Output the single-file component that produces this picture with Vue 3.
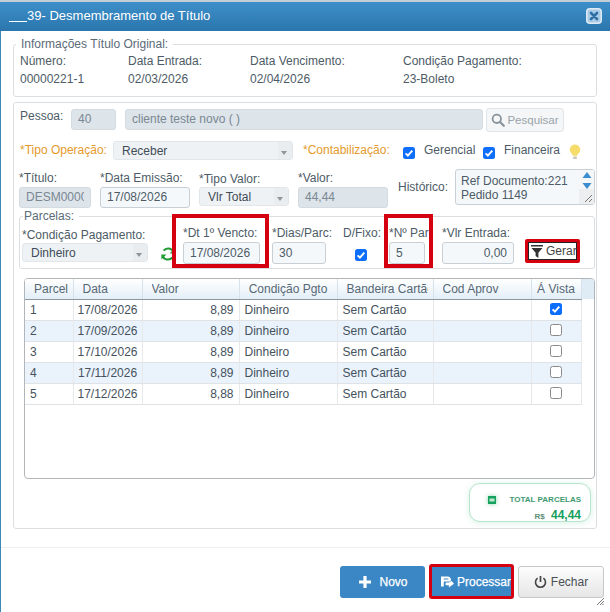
<script setup>
const info = [
  { label: 'Número:', value: '00000221-1', w: 108 },
  { label: 'Data Entrada:', value: '02/03/2026', w: 122 },
  { label: 'Data Vencimento:', value: '02/04/2026', w: 153 },
  { label: 'Condição Pagamento:', value: '23-Boleto', w: 160 }
]
const heads = ['Parcel', 'Data', 'Valor', 'Condição Pgto', 'Bandeira Cartão', 'Cod Aprov', 'Á Vista']
const rows = [
  { n: 1, d: '17/08/2026', v: '8,89', c: true },
  { n: 2, d: '17/09/2026', v: '8,89', c: false },
  { n: 3, d: '17/10/2026', v: '8,89', c: false },
  { n: 4, d: '17/11/2026', v: '8,89', c: false },
  { n: 5, d: '17/12/2026', v: '8,88', c: false }
]
</script>

<template>
  <div class="page">
    <div class="modal">
      <header class="head">
        <span class="title"><u>&nbsp;&nbsp;&nbsp;&nbsp;&nbsp;</u>39- Desmembramento de Título</span>
        <span class="close">
          <svg width="16" height="16" viewBox="0 0 16 16"><rect x="0.75" y="0.75" width="14.5" height="14.5" rx="3" fill="#a9cbe6" stroke="#dfeaf4" stroke-width="1.5"/><path d="M5 5l6 6M11 5l-6 6" stroke="#2f6fa5" stroke-width="2.6" stroke-linecap="round"/></svg>
        </span>
      </header>

      <div class="body">
        <fieldset class="fs orig">
          <legend>Informações Título Original:</legend>
          <div class="info">
            <div v-for="i in info" :key="i.label" class="info-col" :style="{ width: i.w + 'px' }">
              <div>{{ i.label }}</div>
              <div>{{ i.value }}</div>
            </div>
          </div>
        </fieldset>

        <section class="panel">
          <div class="r-pessoa">
            <span class="lb-p">Pessoa:</span>
            <span class="inp dis w45">40</span>
            <span class="inp dis name">cliente teste novo ( )</span>
            <span class="btn-search">
              <svg width="14" height="14" viewBox="0 0 14 14"><circle cx="5.8" cy="5.8" r="4.2" fill="none" stroke="#8a949c" stroke-width="1.8"/><path d="M9 9l3.8 3.8" stroke="#8a949c" stroke-width="2.2" stroke-linecap="round"/></svg>
              Pesquisar
            </span>
          </div>

          <div class="r-tipo">
            <span class="orange op">*Tipo Operação:</span>
            <span class="sel op-sel">Receber<i class="caret"></i></span>
            <span class="orange cont">*Contabilização:</span>
            <span class="cb on c1"><svg viewBox="0 0 12 12"><path d="M2.6 6.4l2.3 2.3 4.4-5" fill="none" stroke="#fff" stroke-width="1.9"/></svg></span>
            <span class="t-ger">Gerencial</span>
            <span class="cb on c2"><svg viewBox="0 0 12 12"><path d="M2.6 6.4l2.3 2.3 4.4-5" fill="none" stroke="#fff" stroke-width="1.9"/></svg></span>
            <span class="t-fin">Financeira</span>
            <svg class="bulb" width="12" height="16" viewBox="0 0 12 16"><path d="M6 .5a5.2 5.2 0 0 0-3.2 9.3c.7.6 1 1.2 1 2h4.4c0-.8.3-1.4 1-2A5.2 5.2 0 0 0 6 .5z" fill="#f6dc6a"/><rect x="4" y="12.4" width="4" height="2.6" rx="1" fill="#c9c7b4"/></svg>
          </div>

          <div class="r-tit">
            <div class="col w72"><label>*Título:</label><span class="inp dis clip"><span>DESM00000</span></span></div>
            <div class="col w90"><label>*Data Emissão:</label><span class="inp">17/08/2026</span></div>
            <div class="col w90"><label class="lb-tv">*Tipo Valor:</label><span class="sel tv">Vlr Total<i class="caret"></i></span></div>
            <div class="col w90"><label>*Valor:</label><span class="inp dis">44,44</span></div>
            <span class="hist">Histórico:</span>
            <div class="ta">
              <div>Ref Documento:221<br>Pedido 1149</div>
              <div class="spin">
                <svg width="10" height="20" viewBox="0 0 10 20"><path d="M5 1L9.5 7H.5zM.5 12h9L5 18z" fill="#3c8dd0"/></svg>
                <span class="grip-box">
                  <svg class="grip" width="9" height="9" viewBox="0 0 9 9"><path d="M1 8l7-7M5 8l3-3" stroke="#777" stroke-width="1"/></svg>
                </span>
              </div>
            </div>
          </div>

          <fieldset class="fs parc">
            <legend>Parcelas:</legend>
            <div class="parc-row">
              <div class="col w126"><label>*Condição Pagamento:</label><span class="sel">Dinheiro<i class="caret"></i></span></div>
              <svg class="refresh" width="14" height="14" viewBox="0 0 14 14"><path d="M12.4 5.2A5.7 5.7 0 0 0 2.6 3.6M1.6 8.8a5.7 5.7 0 0 0 9.8 1.6" fill="none" stroke="#1f9a34" stroke-width="2"/><path d="M13.6 1.4v5h-5zM.4 12.6v-5h5z" fill="#1f9a34"/></svg>
              <div class="col w77 mark"><label>*Dt 1º Vencto:</label><span class="inp">17/08/2026</span><b class="hl h1"></b></div>
              <div class="col w54 d"><label>*Dias/Parc:</label><span class="inp">30</span></div>
              <div class="col dfix"><label>D/Fixo:</label><span class="cb on"><svg viewBox="0 0 12 12"><path d="M2.6 6.4l2.3 2.3 4.4-5" fill="none" stroke="#fff" stroke-width="1.9"/></svg></span></div>
              <div class="col w36 np mark"><label>*Nº Par:</label><span class="inp">5</span><b class="hl h2"></b></div>
              <div class="col w72 ve"><label>*Vlr Entrada:</label><span class="inp right">0,00</span></div>
              <span class="gerar">
                <svg width="12" height="13" viewBox="0 0 12 13"><path d="M0 0h12v1.6H0zM.5 3h11L7.4 7.8V13L4.6 11V7.8z" fill="#333"/></svg>
                Gerar
              </span>
            </div>
          </fieldset>

          <div class="grid">
            <table>
              <colgroup>
                <col style="width:48px"><col style="width:69px"><col style="width:97px"><col style="width:98px"><col style="width:96px"><col style="width:98px"><col style="width:50px">
              </colgroup>
              <thead>
                <tr><th v-for="h in heads" :key="h" :class="{ lc: h === 'Condição Pgto' || h === 'Á Vista' }"><span>{{ h }}</span></th></tr>
              </thead>
              <tbody>
                <tr v-for="r in rows" :key="r.n">
                  <td>{{ r.n }}</td>
                  <td class="ctr">{{ r.d }}</td>
                  <td class="num">{{ r.v }}</td>
                  <td>Dinheiro</td>
                  <td>Sem Cartão</td>
                  <td></td>
                  <td class="ck">
                    <span v-if="r.c" class="cb on"><svg viewBox="0 0 12 12"><path d="M2.6 6.4l2.3 2.3 4.4-5" fill="none" stroke="#fff" stroke-width="1.9"/></svg></span>
                    <span v-else class="cb"></span>
                  </td>
                </tr>
              </tbody>
            </table>
          </div>

          <div class="total-wrap">
            <div class="total">
              <svg class="tic" width="8" height="8" viewBox="0 0 8 8"><rect width="8" height="8" fill="#16a05d"/><rect x="1.5" y="2.5" width="5" height="3" fill="#bfe8d2"/></svg>
              <div class="tt">
                <div class="t1">TOTAL PARCELAS</div>
                <div class="t2"><small>R$</small> 44,44</div>
              </div>
            </div>
          </div>
        </section>
      </div>

      <footer class="foot">
        <span class="b blue novo">
          <svg width="12" height="12" viewBox="0 0 12 12"><path d="M4.4 0h3.2v4.4H12v3.2H7.6V12H4.4V7.6H0V4.4h4.4z" fill="#fff"/></svg>
          <em>Novo</em>
        </span>
        <span class="b blue proc">
          <svg width="14" height="13" viewBox="0 0 14 13"><path d="M0 1h7.5a3.4 3.4 0 0 1 2.6 5.4H3V12H0zM3 3.3v1h5v-1z" fill="#fff" fill-rule="evenodd"/><path d="M8.5 7.5H5v3h3.5V13L14 9l-2.4-3z" fill="#fff"/></svg>
          Processar
        </span>
        <span class="b fechar">
          <svg width="13" height="14" viewBox="0 0 13 14"><path d="M3.6 3.2a5 5 0 1 0 5.8 0" fill="none" stroke="#444" stroke-width="1.6"/><path d="M6.5 1v6" stroke="#444" stroke-width="1.7"/></svg>
          Fechar
        </span>
        <svg class="rz" width="7" height="7" viewBox="0 0 7 7"><path d="M0 7l7-7M3 7l4-4M5.5 7L7 5.5" stroke="#777" stroke-width="1"/></svg>
      </footer>
    </div>
  </div>
</template>

<style>
html, body { margin: 0; background: #fff; }
</style>

<style scoped>
.page { width: 610px; height: 612px; overflow: hidden; background: #c3ced6; padding-top: 2px; box-sizing: border-box; font: 12px "Liberation Sans", Arial, sans-serif; color: #4d5b66; }
.modal { position: relative; height: 610px; background: #fff; border-left: 1px solid #3f87b8; border-radius: 4px 4px 0 0; box-sizing: border-box; display: flex; flex-direction: column; }
.head { height: 29px; flex: none; display: flex; align-items: center; justify-content: space-between; padding: 0 8px 2px 9px; background: linear-gradient(#3d8fc9, #2b76ad); color: #fff; font-size: 13px; box-sizing: border-box; margin-left: -1px; }
.close { display: flex; }

.body { flex: none; height: 516px; padding: 6px 12px 0 12px; box-sizing: border-box; }
.fs { margin: 0; padding: 0; border: 1px solid #dcdfe2; border-radius: 3px; }
legend { padding: 0 5px; color: #5b6b78; font-size: 12px; margin-left: -4px; line-height: 14px; }
.orig { width: 584px; height: 60px; box-sizing: border-box; padding-left: 6px; }
.info { display: flex; margin-top: 2px; }
.info-col { line-height: 17.5px; }

.panel { position: relative; width: 584px; height: 427px; box-sizing: border-box; margin-top: 5px; border: 1px solid #dcdfe2; border-radius: 3px; padding: 5px 0 0 5px; }

.inp { display: block; padding: 0 6px; background: #f4f8fb; border: 1px solid #c8d0d6; border-radius: 3px; height: 19px; line-height: 19px; white-space: nowrap; overflow: hidden; }
.dis { background: #dde4ea; border-color: #d3dbe1; color: #7a8892; }
.inp.right { text-align: right; }
.sel { position: relative; display: block; height: 19px; line-height: 18px; padding: 0 7px 0 8px; background: #eef2f5; border: 1px solid #e1e6ea; border-radius: 3px; box-sizing: border-box; color: #3f4c57; }
.sel::after { content: ""; position: absolute; right: 0; top: 0; bottom: 0; width: 14px; background: #e9edf0; }
.caret { position: absolute; z-index: 1; right: 5px; top: 9px; border: 3px solid transparent; border-top: 4px solid #8d969d; border-bottom: 0; }

.r-pessoa { display: flex; align-items: flex-start; height: 24px; padding-left: 1px; }
.lb-p { width: 51px; line-height: 17px; }
.w45 { width: 31px; }
.r-pessoa .inp { margin-top: 1px; }
.name { width: 344px; margin-left: 9px; }
.btn-search { margin-left: 3px; width: 78px; height: 24px; box-sizing: border-box; border: 1px solid #e0e4e7; border-radius: 3px; background: #f4f6f7; color: #9aa3aa; font-size: 11.5px; display: flex; align-items: center; justify-content: center; gap: 2px; }

.r-tipo { display: flex; align-items: center; height: 20px; margin-top: 8px; padding-left: 1px; }
.orange { color: #e59a2c; }
.op { width: 93px; }
.op-sel { width: 180px; }
.cont { margin-left: 10px; width: 100px; }
.cb { display: inline-block; width: 12px; height: 12px; border: 1px solid #8a8a8a; border-radius: 2.5px; box-sizing: border-box; background: #fff; flex: none; }
.cb.on { background: #0d6efd; border: none; }
.cb svg { display: block; width: 12px; height: 12px; }
.c1 { margin-top: 5px; }
.t-ger { margin-left: 9px; width: 59px; }
.c2 { margin-top: 5px; }
.t-fin { margin-left: 9px; width: 65px; }
.bulb { margin-top: 4px; }

.r-tit { display: flex; align-items: flex-start; height: 40px; margin-top: 10px; }
.col { display: flex; flex-direction: column; margin-right: 9px; flex: none; position: relative; }
.col label { line-height: 16px; height: 17px; white-space: nowrap; }
.w72 { width: 72px; }
.w90 { width: 90px; }
.w126 { width: 126px; }
.w77 { width: 77px; }
.w54 { width: 54px; }
.w36 { width: 36px; }
.lb-tv { margin-top: 1px; height: 16px !important; }
.clip span { display: block; overflow: hidden; }
.hist { margin: 10px 0 0 1px; width: 56px; }
.ta { position: relative; width: 140px; height: 36px; margin: -1px 0 0 1px; box-sizing: border-box; background: #f4f8fb; border: 1px solid #c8d0d6; border-radius: 3px; padding: 4px 5px; line-height: 14px; }
.spin { position: absolute; right: 0; top: 0; bottom: 0; width: 15px; background: #f4f6f8; display: flex; justify-content: center; padding-top: 1px; box-sizing: border-box; }
.grip-box { position: absolute; right: 0; bottom: 0; width: 15px; height: 15px; background: #eceef0; }
.grip { position: absolute; right: 1px; bottom: 1px; }

.parc { width: 576px; height: 59px; box-sizing: border-box; margin-top: 0; padding: 0 0 0 2px; }
.parc legend { padding: 0 5px 0 1px; margin-left: 1px; line-height: 12px; }
.parc-row { display: flex; align-items: flex-start; margin-top: 3px; position: relative; }
.parc-row > .col:first-child { margin-right: 0; }
.parc-row .col:first-child label { line-height: 14px; margin-top: 3px; height: 15px; }
.refresh { margin: 22px 0 0 13px; flex: none; }
.parc-row .w77 { margin-left: 8px; margin-right: 12px; }
.parc-row .inp { height: 20px; line-height: 20px; }
.d { margin-right: 17px !important; }
.dfix { width: 37px; margin-right: 9px !important; align-items: flex-start; }
.dfix .cb { margin: 7px 0 0 12px; }
.np { margin-right: 17px !important; }
.ve { margin-right: 11px !important; }
.hl { position: absolute; border: 4px solid #d5000f; box-sizing: border-box; pointer-events: none; }
.h1 { left: -11px; top: -11px; width: 97px; height: 54px; }
.h2 { left: -5px; top: -11px; width: 49px; height: 54px; }
.gerar { width: 55px; height: 24px; box-sizing: border-box; margin-top: 14px; border: 3px solid #d5000f; border-radius: 2px; background: #fff; box-shadow: inset 0 0 0 1px #222; color: #444; display: flex; align-items: center; gap: 3px; padding-left: 3px; white-space: nowrap; overflow: hidden; flex: none; }

.grid { width: 571px; height: 201px; box-sizing: border-box; margin: 9px 0 0 5px; border: 1px solid #b3b6b8; border-radius: 4px; overflow: hidden; position: relative; background: #fff; }
.grid::before { content: ""; position: absolute; left: 0; right: 0; top: 0; height: 20px; background: #dfecf6; }
table { position: relative; border-collapse: collapse; table-layout: fixed; width: 556px; }
th { height: 20px; padding: 0 5px 0 9px; box-sizing: border-box; font-weight: 400; text-align: left; color: #566874; background: linear-gradient(#fff, #e3eef7); border-right: 1px solid #d8e2ea; border-bottom: 1px solid #8f979c; overflow: hidden; white-space: nowrap; }
th span { display: block; overflow: hidden; }
th.lc { text-align: center; padding: 0 3px; }
td { height: 21px; padding: 0 5px; box-sizing: border-box; border-right: 1px solid #e6e8ea; border-bottom: 1px solid #dfe3e6; color: #45525c; white-space: nowrap; }
tbody tr:nth-child(even) td { background: #eaf3fc; }
td.ctr { text-align: center; padding: 0; }
td.num { text-align: right; }
td.ck { text-align: center; padding: 0 1px 0 0; }
td.ck .cb { display: block; margin: 0 auto 2px; }

.total-wrap { display: flex; justify-content: flex-end; padding: 4px 5px 0 0; }
.total { width: 122px; height: 39px; box-sizing: border-box; border: 1px solid #b7e5cb; border-radius: 11px; background: #fff; box-shadow: 0 1px 6px rgba(40,180,110,.18); display: flex; justify-content: space-between; padding: 12px 9px 0 18px; color: #16a05d; }
.tic { margin-top: 0; box-shadow: 0 0 4px rgba(22,160,93,.5); }
.tt { text-align: right; }
.t1 { font-size: 8px; font-weight: 700; line-height: 9px; margin-top: -1px; color: #3f9a70; white-space: nowrap; }
.t2 { font-size: 12px; font-weight: 700; line-height: 14px; margin-top: 4px; }
.t2 small { font-size: 8px; color: #5a8f75; margin-right: 3px; }

.foot { position: relative; flex: 1; border-top: 1px solid #eceeef; display: flex; align-items: flex-start; padding: 16px 0 0 339px; gap: 4px; }
.b { display: flex; align-items: center; justify-content: center; box-sizing: border-box; width: 85px; height: 32px; margin-top: 2px; border-radius: 3px; font-size: 12px; flex: none; }
.blue { background: #3b87c6; color: #fff; -webkit-text-stroke: .25px #fff; }
.novo { gap: 8px; padding-left: 2px; }
.novo em { font-style: normal; }
.proc { height: 35px; margin-top: 0; border: 3px solid #d5000f; gap: 3px; white-space: nowrap; overflow: hidden; justify-content: flex-start; padding: 0 0 0 9px; }
.fechar { width: 86px; border: 1px solid #c6c8ca; background: linear-gradient(#fdfdfd, #e6e6e6); color: #4a4f54; gap: 4px; }
.rz { position: absolute; right: 6px; bottom: 7px; }
</style>
